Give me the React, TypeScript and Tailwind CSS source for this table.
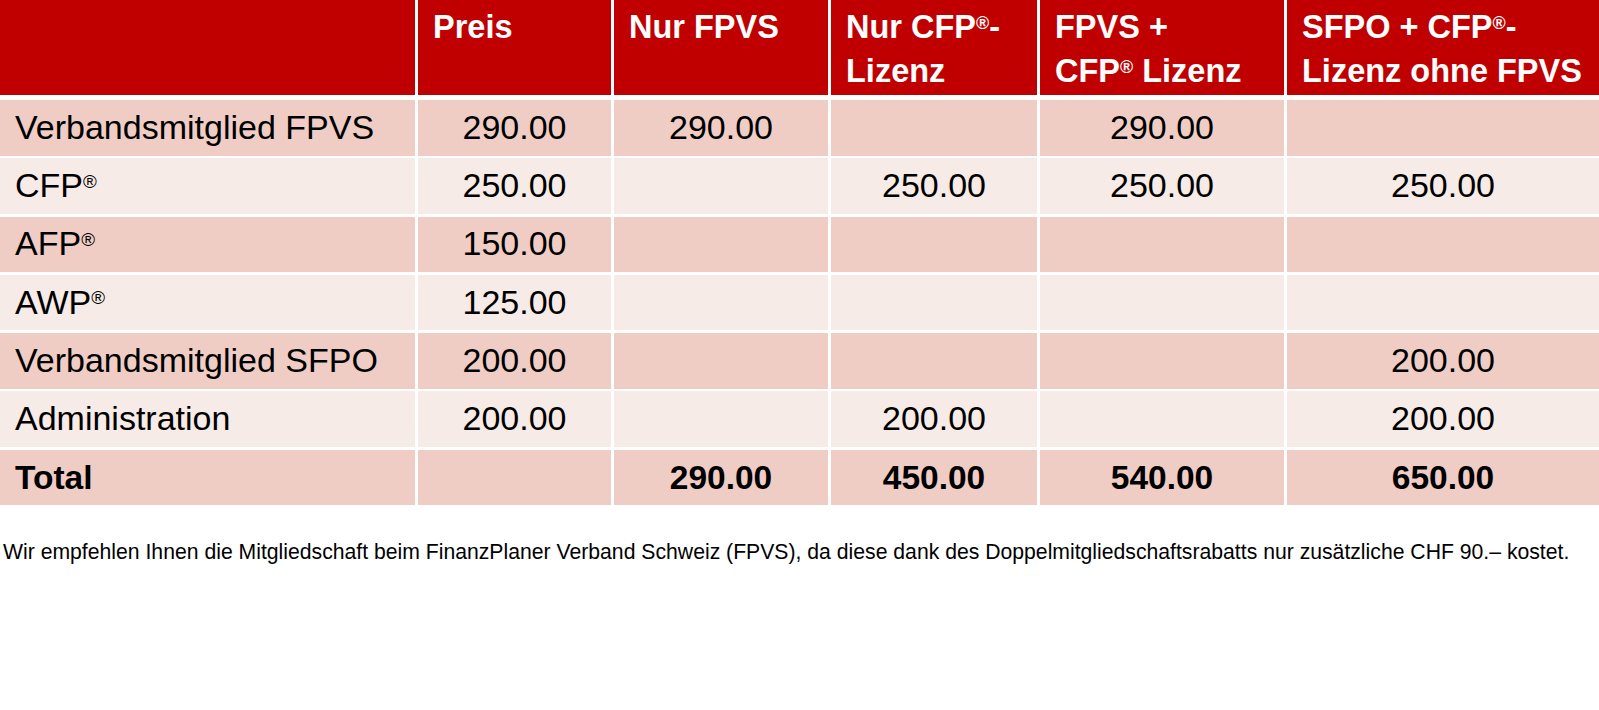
const headers = ["", "Preis", "Nur FPVS", "Nur CFP®-\nLizenz", "FPVS +\nCFP® Lizenz", "SFPO + CFP®-\nLizenz ohne FPVS"];

const rows = [
  ["Verbandsmitglied FPVS", "290.00", "290.00", "", "290.00", ""],
  ["CFP®", "250.00", "", "250.00", "250.00", "250.00"],
  ["AFP®", "150.00", "", "", "", ""],
  ["AWP®", "125.00", "", "", "", ""],
  ["Verbandsmitglied SFPO", "200.00", "", "", "", "200.00"],
  ["Administration", "200.00", "", "200.00", "", "200.00"],
];

const total = ["Total", "", "290.00", "450.00", "540.00", "650.00"];

const cols = "grid grid-cols-[415px_193px_214px_206px_244px_312px] gap-x-[3px]";

// ® is set small and raised, as in the original document
function Reg({ text }: { text: string }) {
  const parts = text.split("®");
  return (
    <>
      {parts.map((p, i) => (
        <span key={i}>
          {p}
          {i < parts.length - 1 && (
            <span className="relative -top-[0.5em] text-[0.55em] leading-none">®</span>
          )}
        </span>
      ))}
    </>
  );
}

function Row({ cells, bold, dark }: { cells: string[]; bold?: boolean; dark: boolean }) {
  return (
    <>
      {cells.map((c, i) => (
        <div
          key={i}
          className={[
            "flex items-center leading-none",
            dark ? "bg-[#efcdc4]" : "bg-[#f7ebe7]",
            bold ? "text-[33.5px] font-bold" : "pb-[2px] text-[34px]",
            i === 0 ? "justify-start px-[15px]" : "justify-center",
          ].join(" ")}
        >
          <span>
            <Reg text={c} />
          </span>
        </div>
      ))}
    </>
  );
}

export default function App() {
  return (
    <main className="bg-white font-['Liberation_Sans',Arial,sans-serif] text-black">
      <div className={`${cols} h-[95px]`}>
        {headers.map((h, i) => (
          <div
            key={i}
            className="bg-[#c00000] px-[15px] pt-[5px] text-[32.5px] font-bold leading-[44px] whitespace-pre-line text-white"
          >
            <Reg text={h} />
          </div>
        ))}
      </div>
      <div className={`${cols} mt-[5px] auto-rows-[55.5px] gap-y-[2.8px]`}>
        {rows.map((r, ri) => (
          <Row key={ri} cells={r} dark={ri % 2 === 0} />
        ))}
        <Row cells={total} bold dark />
      </div>
      <p className="mt-[34px] pl-[3px] text-[21.2px] leading-[25px]">
        Wir empfehlen Ihnen die Mitgliedschaft beim FinanzPlaner Verband Schweiz (FPVS), da diese dank des Doppelmitgliedschaftsrabatts nur zusätzliche CHF 90.– kostet.
      </p>
    </main>
  );
}
